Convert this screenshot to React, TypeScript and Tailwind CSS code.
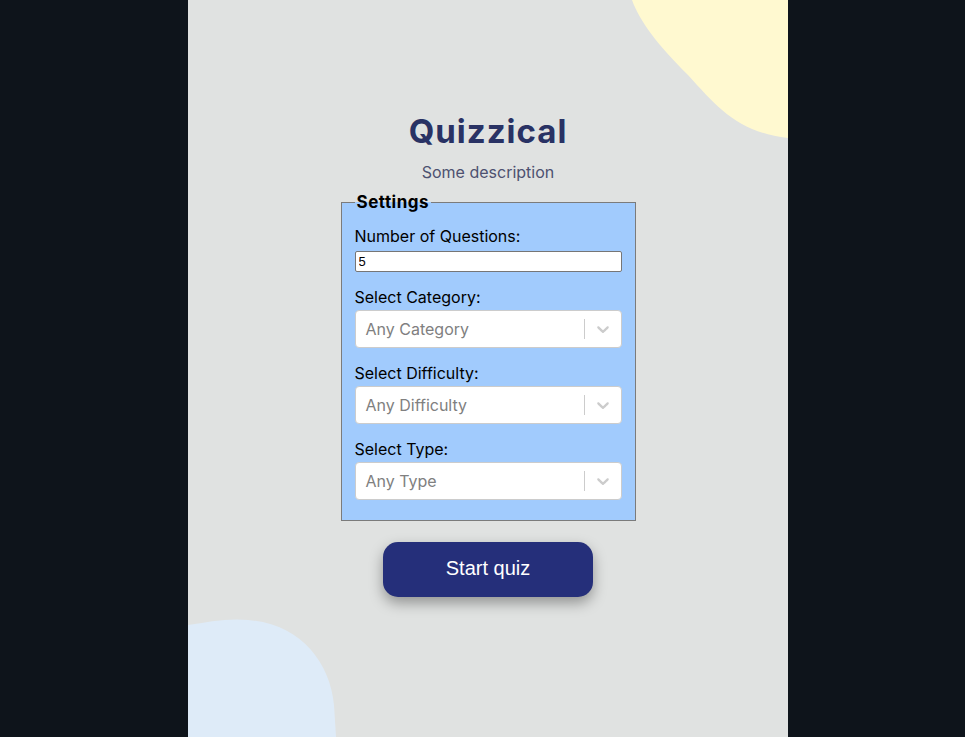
const Chevron = () => (
  <svg viewBox="0 0 20 20" width="20" height="20" fill="#cccccc" aria-hidden="true">
    <path d="M4.516 7.548c0.436-0.446 1.043-0.481 1.576 0l3.908 3.747 3.908-3.747c0.533-0.481 1.141-0.446 1.574 0 0.436 0.445 0.408 1.197 0 1.615-0.406 0.418-4.695 4.502-4.695 4.502-0.217 0.223-0.502 0.335-0.787 0.335s-0.57-0.112-0.789-0.335c0 0-4.287-4.084-4.695-4.502s-0.436-1.17 0-1.615z" />
  </svg>
);

const FakeSelect = ({ placeholder }: { placeholder: string }) => (
  <div className="flex items-center h-[38px] bg-white border border-[#cccccc] rounded-[4px]">
    <div className="flex-1 px-[10px] text-[16px] text-[#808080]">{placeholder}</div>
    <span className="w-px h-[20px] bg-[#cccccc]" />
    <div className="p-[8px] flex items-center">
      <Chevron />
    </div>
  </div>
);

const App = () => {
  const selects = [
    { label: 'Select Category:', placeholder: 'Any Category' },
    { label: 'Select Difficulty:', placeholder: 'Any Difficulty' },
    { label: 'Select Type:', placeholder: 'Any Type' }
  ];

  return (
    <div className="w-full h-[737px] bg-[#0e141b]">
      <main
        className="relative w-[600px] h-full ml-[188px] bg-[#e0e2e1] overflow-hidden"
        style={{ fontFamily: 'Inter, "Noto Sans", sans-serif' }}>
        <svg className="absolute inset-0" width="600" height="737" viewBox="0 0 600 737" aria-hidden="true">
          <path d="M444 0 C 452 22, 470 45, 500 75 C 530 108, 550 132, 600 138 L600 0 Z" fill="#fff9d0" />
          <path d="M0 625 C 20 622, 40 618, 60 620 C 112 624, 142 662, 146 705 L148 737 L0 737 Z" fill="#deebf8" />
        </svg>

        <div className="relative flex flex-col items-center pt-[109px]">
          <h1 className="text-[33px] leading-[44px] font-bold text-[#293264] tracking-[1px]">Quizzical</h1>
          <p className="mt-[9px] text-[16px] leading-[20px] text-[#4d5170]">Some description</p>

          <fieldset className="mt-[8px] w-[295px] bg-[#a1cbfd] border border-[#7b7b7b] px-[13px] pt-[9px] pb-[20px]">
            <legend className="px-[2px] text-[17px] leading-[25px] font-bold text-black tracking-[0.5px]">Settings</legend>

            <label className="block text-[16px] leading-[24px] text-black">Number of Questions:</label>
            <input
              type="number"
              defaultValue={5}
              className="mt-[3px] block w-full h-[21px] bg-white border border-[#767676] rounded-[2px] px-[3px] text-[13px] text-black"
              style={{ fontFamily: '"Liberation Sans", Arial, sans-serif' }}
            />

            {selects.map(({ label, placeholder }) => (
              <div key={label} className="mt-[13px]">
                <label className="block text-[16px] leading-[24px] text-black">{label}</label>
                <div className="mt-[1px]">
                  <FakeSelect placeholder={placeholder} />
                </div>
              </div>
            ))}
          </fieldset>

          <button
            className="mt-[21px] w-[210px] h-[55px] rounded-[15px] bg-[#252f7a] text-white text-[20px] leading-[22px] pb-[3px] shadow-[0_6px_14px_rgba(0,0,0,0.35)]"
            style={{ fontFamily: '"Liberation Sans", Arial, sans-serif' }}>
            Start quiz
          </button>
        </div>
      </main>
    </div>
  );
};

export default App;
